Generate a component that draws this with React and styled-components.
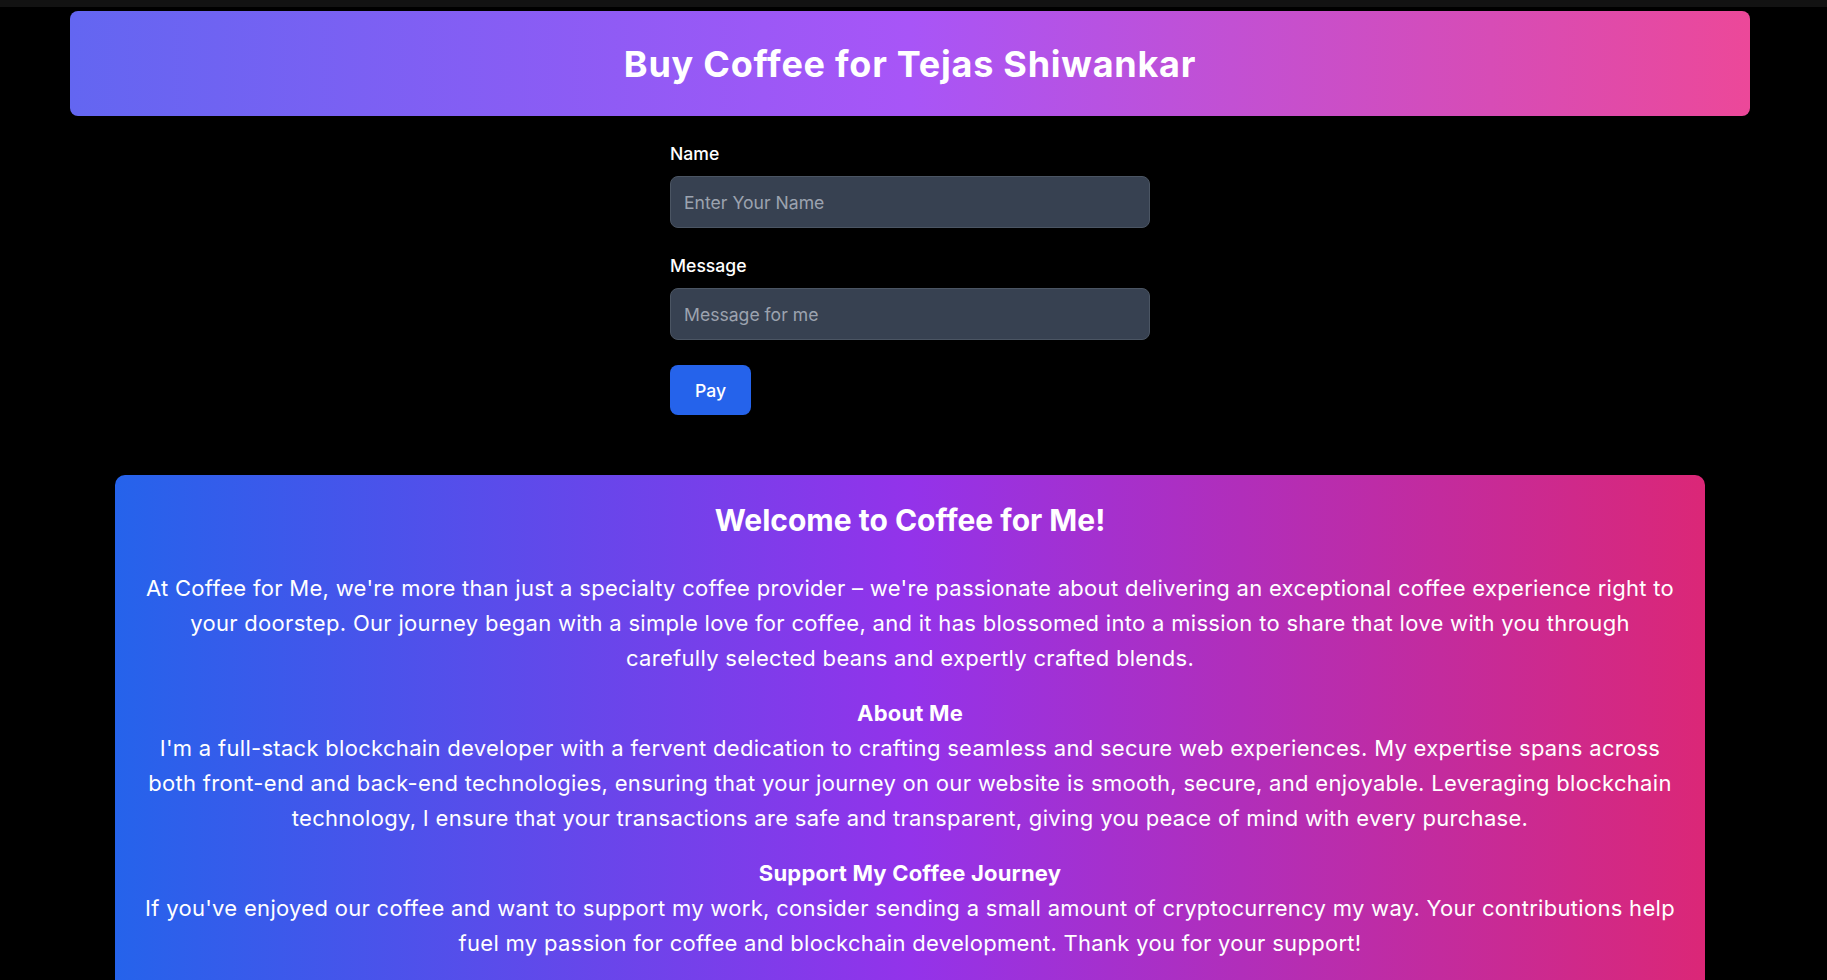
import React from "react";
import styled, { createGlobalStyle } from "styled-components";

const Global = createGlobalStyle`
  html, body { margin: 0; padding: 0; background: #000; }
  body { font-family: Inter, "Noto Sans", sans-serif; color: #fff; }
  * { box-sizing: border-box; }
`;

const TopStrip = styled.div`
  height: 7px;
  background: #121212;
`;

const Page = styled.main`
  width: 1820px;
  padding-top: 4px;
`;

const Header = styled.header`
  width: 1680px;
  height: 105px;
  margin: 0 auto;
  border-radius: 8px;
  background: linear-gradient(to right, #6366f1, #a855f7, #ec4899);
  display: flex;
  align-items: center;
  justify-content: center;
`;

const Title = styled.h1`
  margin: 0;
  font-size: 36px;
  line-height: 44px;
  font-weight: 700;
  letter-spacing: 0.75px;
  color: #fff;
`;

const Form = styled.form`
  width: 480px;
  margin: 26px auto 0;
  display: flex;
  flex-direction: column;
`;

const Field = styled.div`
  display: flex;
  flex-direction: column;
  margin-bottom: ${(p) => p.$gap}px;
`;

const Label = styled.label`
  font-size: 17.6px;
  line-height: 24px;
  font-weight: 500;
  color: #fff;
  margin-bottom: 10px;
`;

const Input = styled.input`
  height: 52px;
  width: 100%;
  background: #374151;
  border: 1px solid #4b5563;
  border-radius: 8px;
  padding: 0 13px;
  font-family: inherit;
  font-size: 17.6px;
  color: #fff;
  outline: none;
  &::placeholder { color: #9ca3af; }
`;

const Button = styled.button`
  align-self: flex-start;
  width: 81px;
  height: 50px;
  border: none;
  border-radius: 8px;
  background: #2563eb;
  color: #fff;
  font-family: inherit;
  font-size: 17.6px;
  font-weight: 500;
  cursor: pointer;
`;

const Welcome = styled.section`
  width: 1590px;
  margin: 60px auto 0;
  padding: 27px 28px 40px;
  border-radius: 10px;
  background: linear-gradient(to right, #2563eb, #9333ea, #db2777);
  text-align: center;
  color: #fff;
`;

const WelcomeTitle = styled.h2`
  margin: 0 0 33px;
  font-size: 30px;
  line-height: 36px;
  font-weight: 700;
`;

const Section = styled.div`
  margin-top: ${(p) => (p.$first ? 0 : 20)}px;
`;

const SubTitle = styled.h3`
  margin: 0;
  font-size: 22px;
  line-height: 35px;
  font-weight: 700;
  letter-spacing: 0.2px;
`;

const Para = styled.p`
  margin: 0;
  font-size: 22px;
  line-height: 35px;
  font-weight: 400;
  letter-spacing: 0.3px;
`;

export default function App() {
  return (
    <>
      <Global />
      <TopStrip />
      <Page>
        <Header>
          <Title>Buy Coffee for Tejas Shiwankar</Title>
        </Header>
        <Form onSubmit={(e) => e.preventDefault()}>
          <Field $gap={26}>
            <Label htmlFor="name">Name</Label>
            <Input id="name" placeholder="Enter Your Name" />
          </Field>
          <Field $gap={25}>
            <Label htmlFor="message">Message</Label>
            <Input id="message" placeholder="Message for me" />
          </Field>
          <Button type="submit">Pay</Button>
        </Form>
        <Welcome>
          <WelcomeTitle>Welcome to Coffee for Me!</WelcomeTitle>
          <Section $first>
            <Para>
              At Coffee for Me, we're more than just a specialty coffee provider – we're passionate about
              delivering an exceptional coffee experience right to your doorstep. Our journey began with a
              simple love for coffee, and it has blossomed into a mission to share that love with you through
              carefully selected beans and expertly crafted blends.
            </Para>
          </Section>
          <Section>
            <SubTitle>About Me</SubTitle>
            <Para>
              I'm a full-stack blockchain developer with a fervent dedication to crafting seamless and secure
              web experiences. My expertise spans across both front-end and back-end technologies, ensuring
              that your journey on our website is smooth, secure, and enjoyable. Leveraging blockchain
              technology, I ensure that your transactions are safe and transparent, giving you peace of mind
              with every purchase.
            </Para>
          </Section>
          <Section>
            <SubTitle>Support My Coffee Journey</SubTitle>
            <Para>
              If you've enjoyed our coffee and want to support my work, consider sending a small amount of
              cryptocurrency my way. Your contributions help fuel my passion for coffee and blockchain
              development. Thank you for your support!
            </Para>
          </Section>
        </Welcome>
      </Page>
    </>
  );
}
